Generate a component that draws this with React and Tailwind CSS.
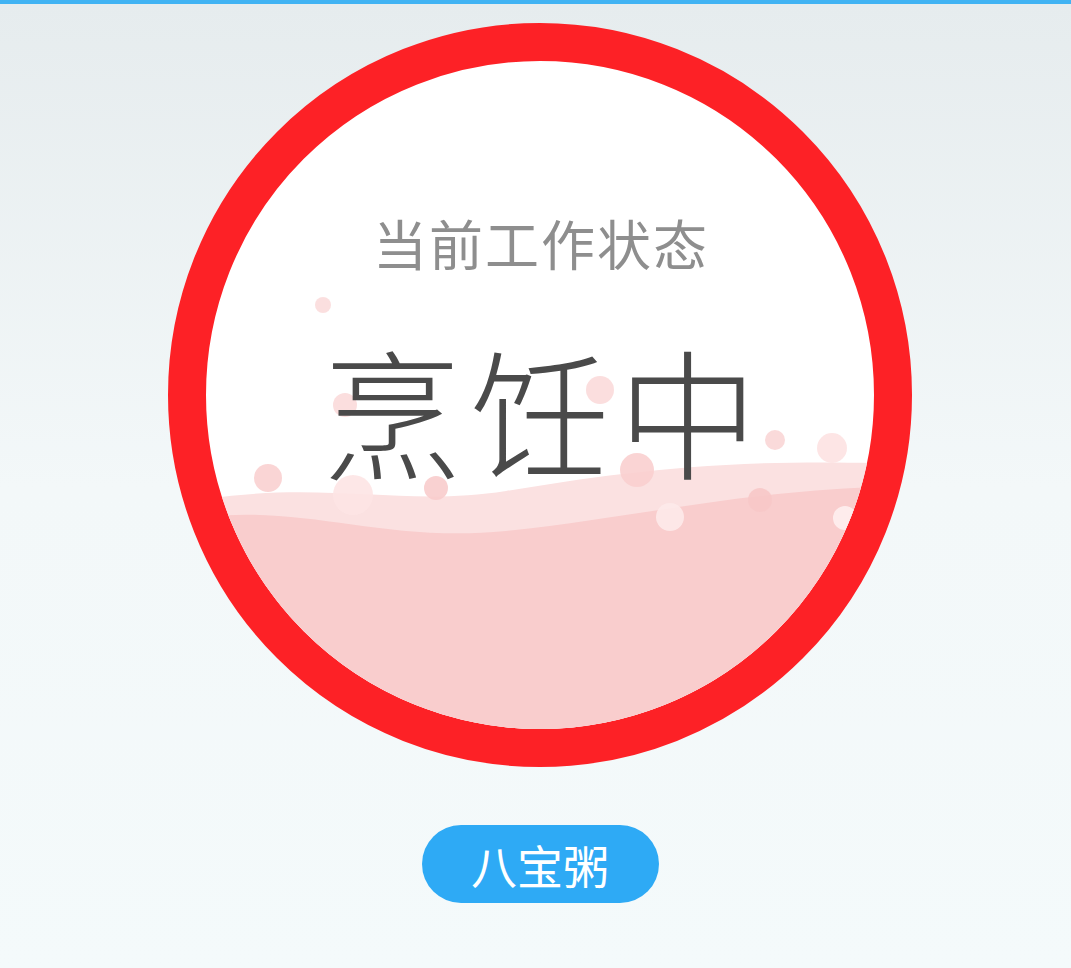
import React from 'react';

const FONT = { fontFamily: '"Noto Sans CJK SC", "Noto Sans", sans-serif' };

// bubbles inside the liquid, coords relative to the inner 668px disc
const BUBBLES = [
  [117, 244, 8, '#fbdcdc'],
  [139, 344, 12, '#fbdada'],
  [62, 417, 14, '#f9d0d0'],
  [147, 434, 20, '#fde4e4'],
  [230, 427, 12, '#f8cccc'],
  [394, 329, 14, '#fbdada'],
  [431, 409, 17, '#f9cfcf'],
  [464, 456, 14, '#fdeaea'],
  [554, 439, 12, '#f7c8c8'],
  [569, 379, 10, '#fad6d6'],
  [626, 387, 15, '#fde2e2'],
  [639, 457, 12, '#fef0f0'],
];

function Liquid() {
  return (
    <svg className="absolute inset-0" width="668" height="668" viewBox="0 0 668 668">
      <path
        d="M0 438 C 120 420, 200 446, 300 430 S 500 398, 668 402 L668 668 L0 668 Z"
        fill="#fbe1e1"
      />
      <path
        d="M0 456 C 100 444, 180 482, 300 470 S 520 432, 668 426 L668 668 L0 668 Z"
        fill="#f9cdcd"
      />
      {BUBBLES.map(([cx, cy, r, c], i) => (
        <circle key={i} cx={cx} cy={cy} r={r} fill={c} opacity="0.9" />
      ))}
    </svg>
  );
}

export default function App() {
  return (
    <div
      className="min-h-screen border-t-4 border-[#41b3f3] bg-gradient-to-b from-[#e6ecee] via-[#f3f8f9] to-[#f4fafb] flex flex-col items-center pt-[19px] pl-[9px]"
      style={FONT}
    >
      <div className="w-[744px] h-[744px] rounded-full border-[38px] border-[#fd2126] bg-white overflow-hidden relative shrink-0">
        <Liquid />
        <div className="relative flex flex-col items-center pt-[155px]">
          <div className="text-[54px] leading-none text-[#8e8e8e] tracking-[2px] pl-[2px]">当前工作状态</div>
          <div className="mt-[68px] text-[140px] leading-none font-light text-[#4a4a4a] tracking-[8px] pl-[8px]">烹饪中</div>
        </div>
      </div>
      <button
        type="button"
        className="mt-[58px] w-[237px] h-[78px] rounded-full bg-[#2eaaf5] text-white text-[46px] leading-none flex items-center justify-center"
      >
        八宝粥
      </button>
    </div>
  );
}
